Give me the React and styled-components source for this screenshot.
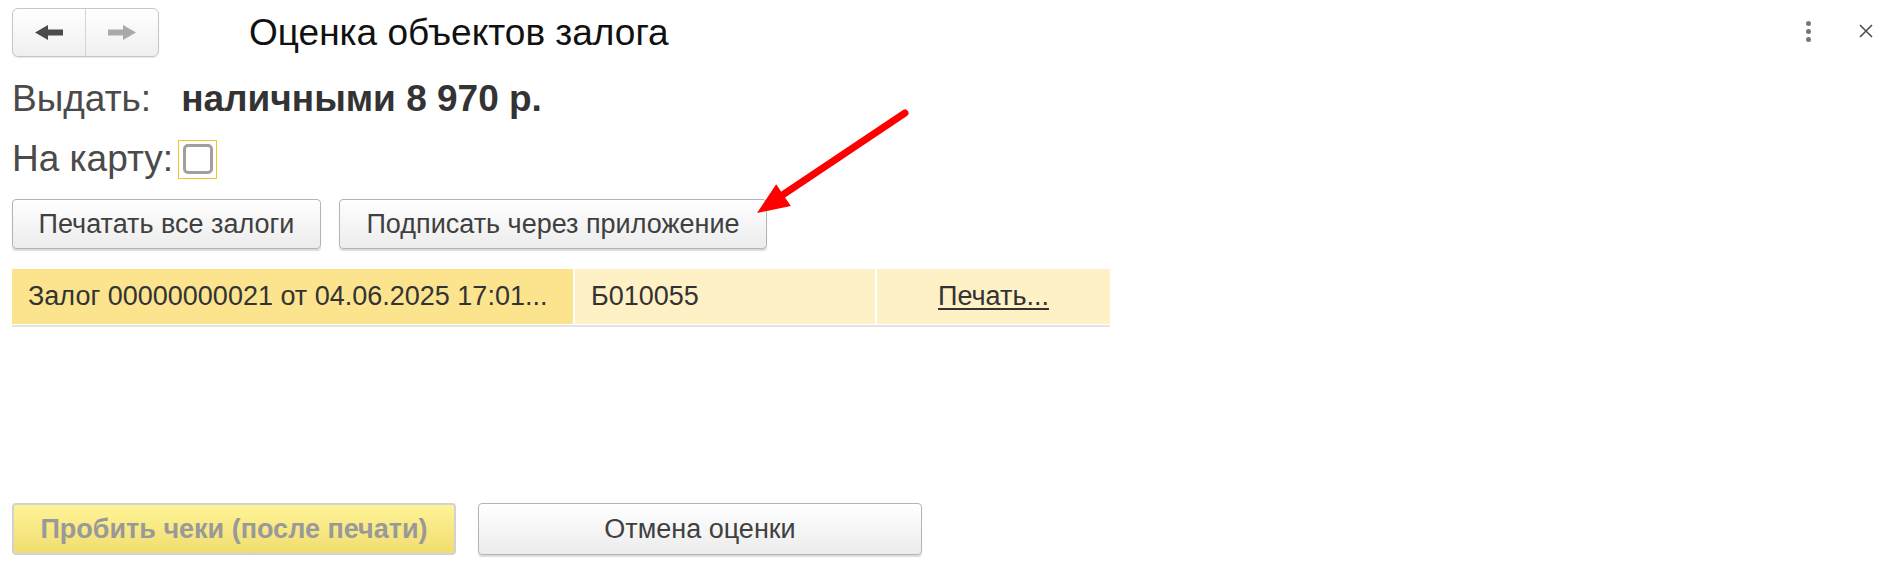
import React from "react"
import styled, { createGlobalStyle } from "styled-components"

const GlobalStyle = createGlobalStyle`
  body {
    margin: 0;
    background: #fff;
    font-family: "Liberation Sans", Arial, sans-serif;
  }
`

const Page = styled.div`
  position: relative;
  height: 566px;
  box-sizing: border-box;
  padding: 8px 14px 11px 12px;
  display: flex;
  flex-direction: column;
`

const Header = styled.div`
  display: flex;
  align-items: center;
  height: 49px;
`

const NavGroup = styled.div`
  display: flex;
  width: 147px;
  height: 49px;
  box-sizing: border-box;
  border: 1px solid #c6c6c6;
  border-radius: 6px;
  background: linear-gradient(#ffffff, #efefef);
  box-shadow: 0 1px 1px rgba(0, 0, 0, 0.1);
`

const NavButton = styled.div`
  flex: 1;
  display: flex;
  align-items: center;
  justify-content: center;
  & + & {
    border-left: 1px solid #d4d4d4;
  }
`

const Title = styled.h1`
  margin: 0 0 0 90px;
  font-size: 37px;
  font-weight: normal;
  color: #111;
`

const WindowTools = styled.div`
  margin-left: auto;
  display: flex;
  align-items: center;
  gap: 48px;
  margin-top: -3px;
`

const Kebab = styled.div`
  display: flex;
  flex-direction: column;
  gap: 3px;
  span {
    width: 5px;
    height: 5px;
    border-radius: 50%;
    background: #777;
  }
`

const Row = styled.div`
  display: flex;
  align-items: center;
  height: 40px;
  margin-top: ${p => p.$gap}px;
`

const Label = styled.span`
  font-size: 37px;
  color: #4a4a4a;
`

const Value = styled.span`
  margin-left: 30px;
  font-size: 37px;
  font-weight: bold;
  color: #333;
`

const Check = styled.div`
  margin-left: 5px;
  width: 39px;
  height: 39px;
  box-sizing: border-box;
  border: 1px solid #f3c623;
  display: flex;
  align-items: center;
  justify-content: center;
  &::after {
    content: "";
    width: 30px;
    height: 30px;
    box-sizing: border-box;
    border: 3px solid #a0a0a0;
    border-radius: 5px;
    background: #fff;
  }
`

const ButtonRow = styled.div`
  display: flex;
  gap: ${p => p.$gap}px;
  margin-top: ${p => p.$top}px;
`

const Button = styled.div`
  width: ${p => p.$w}px;
  height: ${p => p.$h}px;
  box-sizing: border-box;
  display: flex;
  align-items: center;
  justify-content: center;
  font-size: 27px;
  color: #404040;
  border: 1px solid #b4b4b4;
  border-radius: 4px;
  background: linear-gradient(#ffffff, #ececec);
  box-shadow: 0 2px 1px rgba(0, 0, 0, 0.14);
`

const DefaultButton = styled(Button)`
  font-weight: bold;
  color: #999;
  border: 2px solid #d2d2d2;
  background: linear-gradient(#fef497, #f1dd70);
  box-shadow: none;
`

const Table = styled.div`
  margin-top: 20px;
  width: 1098px;
  display: grid;
  grid-template-columns: 561px 302px 235px;
  padding-bottom: 1px;
  border-bottom: 2px solid #e4e4e4;
`

const Cell = styled.div`
  height: 55px;
  display: flex;
  align-items: center;
  justify-content: ${p => (p.$center ? "center" : "flex-start")};
  padding: 0 0 0 ${p => (p.$center ? 0 : 16)}px;
  font-size: 27px;
  color: #333;
  background: ${p => (p.$current ? "#fce48f" : "#fef1c6")};
  border-left: ${p => (p.$current ? 0 : 2)}px solid #fff;
  white-space: nowrap;
  min-width: 0;
`

const Link = styled.span`
  text-decoration: underline;
  text-decoration-thickness: 2px;
  text-underline-offset: 3px;
`

const Footer = styled.div`
  margin-top: auto;
  display: flex;
  gap: 22px;
`

const Pointer = styled.svg`
  position: absolute;
  left: 750px;
  top: 105px;
  pointer-events: none;
`

const Arrow = ({ color, flip }) => (
  <svg width="28" height="15" viewBox="0 0 28 15" style={flip ? { transform: "scaleX(-1)" } : undefined}>
    <polygon points="0,7.5 13,0 13,4.5 28,4.5 28,10.5 13,10.5 13,15" fill={color} />
  </svg>
)

export default function App() {
  return (
    <>
      <GlobalStyle />
      <Page>
        <Header>
          <NavGroup>
            <NavButton>
              <Arrow color="#4b4b4b" />
            </NavButton>
            <NavButton>
              <Arrow color="#a9a9a9" flip />
            </NavButton>
          </NavGroup>
          <Title>Оценка объектов залога</Title>
          <WindowTools>
            <Kebab>
              <span />
              <span />
              <span />
            </Kebab>
            <svg width="14" height="14" viewBox="0 0 14 14">
              <path d="M1 1 L13 13 M13 1 L1 13" stroke="#4d4d4d" strokeWidth="1.6" />
            </svg>
          </WindowTools>
        </Header>

        <Row $gap={22}>
          <Label>Выдать:</Label>
          <Value>наличными 8 970 р.</Value>
        </Row>

        <Row $gap={20}>
          <Label>На карту:</Label>
          <Check />
        </Row>

        <ButtonRow $gap={18} $top={20}>
          <Button $w={309} $h={50}>Печатать все залоги</Button>
          <Button $w={428} $h={50}>Подписать через приложение</Button>
        </ButtonRow>

        <Table>
          <Cell $current>Залог 00000000021 от 04.06.2025 17:01...</Cell>
          <Cell>Б010055</Cell>
          <Cell $center>
            <Link>Печать...</Link>
          </Cell>
        </Table>

        <Footer>
          <DefaultButton $w={444} $h={52}>Пробить чеки (после печати)</DefaultButton>
          <Button $w={444} $h={52}>Отмена оценки</Button>
        </Footer>

        <Pointer width="165" height="115" viewBox="0 0 165 115">
          <line x1="155" y1="8" x2="34" y2="89" stroke="#ff0000" strokeWidth="7" strokeLinecap="round" />
          <polygon points="7,108 40.8,100.9 26.2,79.3" fill="#ff0000" />
        </Pointer>
      </Page>
    </>
  )
}
